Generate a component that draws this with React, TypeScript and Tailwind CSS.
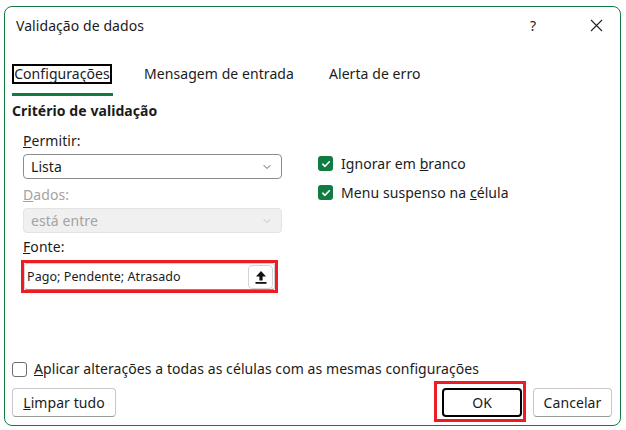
import { ChevronDown } from "lucide-react";

const Check = () => (
  <span className="w-[15px] h-[15px] rounded-[3px] bg-[#107c41] flex items-center justify-center">
    <svg width="10" height="10" viewBox="0 0 10 10" fill="none">
      <path d="M1.8 5.2 L4 7.3 L8.3 2.8" stroke="white" strokeWidth="1.6" strokeLinecap="round" strokeLinejoin="round" />
    </svg>
  </span>
);

const UploadIcon = () => (
  <svg width="12" height="14" viewBox="0 0 12 14">
    <path d="M6 1 L11 6.5 L7.6 6.5 L7.6 10.5 L4.4 10.5 L4.4 6.5 L1 6.5 Z" fill="#111" />
    <rect x="0.5" y="12" width="11" height="1.8" fill="#111" />
  </svg>
);

const Select = ({ value, disabled }: { value: string; disabled?: boolean }) => (
  <div
    className={
      disabled
        ? "h-[25px] w-[259px] rounded-[4px] border border-[#e3e3e3] bg-[#f0f0f0] flex items-center pl-[7px] pr-[8px] text-[#a3a3a3]"
        : "h-[25px] w-[259px] rounded-[4px] border border-[#8c8c8c] bg-white flex items-center pl-[7px] pr-[8px]"
    }
  >
    <span>{value}</span>
    <ChevronDown
      className="ml-auto"
      size={12}
      strokeWidth={1.6}
      color={disabled ? "#b5b5b5" : "#333"}
    />
  </div>
);

export default function App() {
  return (
    <div className="w-[626px] h-[430px] bg-white pl-[4px] pt-[6px] font-['Noto_Sans',sans-serif] text-[14px] leading-[20px] tracking-[0.07px] text-[#1b1b1b]">
      <div className="w-[617px] h-[420px] border border-[#107c41] rounded-[8px] bg-white flex flex-col">
        {/* title bar */}
        <div className="h-[37px] flex items-center pl-[11px]">
          <span>Validação de dados</span>
          <span className="ml-auto w-[10px] text-center">?</span>
          <span className="ml-[52px] mr-[17px] w-[13px] h-[13px] flex items-center justify-center">
            <svg width="13" height="13" viewBox="0 0 13 13">
              <path d="M1 1 L12 12 M12 1 L1 12" stroke="#222" strokeWidth="1.1" />
            </svg>
          </span>
        </div>

        {/* tabs */}
        <div className="mt-[20px] pl-[7px] flex">
          <div className="flex flex-col w-[101px]">
            <span className="border-2 border-black w-[100px] text-center leading-[16px]">
              Configurações
            </span>
            <span className="mt-[9px] h-[3px] bg-[#107c41]" />
          </div>
          <span className="ml-[31px] leading-[20px]">Mensagem de entrada</span>
          <span className="ml-[35px] leading-[20px]">Alerta de erro</span>
        </div>

        <div className="mt-[5px] pl-[7px] font-bold">Critério de validação</div>

        {/* body */}
        <div className="flex pl-[18px]">
          <div className="flex flex-col w-[259px]">
            <span className="mt-[10px]">
              <u>P</u>ermitir:
            </span>
            <div className="mt-[3px]">
              <Select value="Lista" />
            </div>
            <span className="mt-[6px] text-[#a3a3a3]">
              <u>D</u>ados:
            </span>
            <div className="mt-[3px]">
              <Select value="está entre" disabled />
            </div>
            <span className="mt-[4px]">
              <u>F</u>onte:
            </span>
            <div className="mt-[3px] -ml-[2px] w-[257px] h-[33px] border-[3px] border-[#ed1c24]">
              <div className="h-[27px] border border-[#d0d0d0] border-b-[#8a8a8a] rounded-[3px] bg-white flex items-center pl-[2px] pr-[1px]">
                <span className="text-[12.5px]">Pago; Pendente; Atrasado</span>
                <span className="ml-auto w-[25px] h-[24px] border border-[#d4d4d4] rounded-[4px] flex items-center justify-center">
                  <UploadIcon />
                </span>
              </div>
            </div>
          </div>

          <div className="ml-[36px] pt-[35px] flex flex-col gap-[14px]">
            <div className="flex items-center h-[15px]">
              <Check />
              <span className="ml-[8px]">
                Ignorar em <u>b</u>ranco
              </span>
            </div>
            <div className="flex items-center h-[15px]">
              <Check />
              <span className="ml-[8px]">
                Menu suspenso na <u>c</u>élula
              </span>
            </div>
          </div>
        </div>

        <div className="flex-1" />

        {/* bottom */}
        <div className="pl-[7px] flex items-center h-[20px]">
          <span className="w-[15px] h-[15px] rounded-[3px] border border-[#6e6e6e] bg-white" />
          <span className="ml-[7px]">
            <u>A</u>plicar alterações a todas as células com as mesmas configurações
          </span>
        </div>
        <div className="mt-[9px] mb-[8px] pl-[7px] pr-[8px] flex items-center">
          <button className="h-[29px] w-[104px] rounded-[4px] border border-[#c8c8c8] border-b-[#9a9a9a] bg-white">
            <u>L</u>impar tudo
          </button>
          <div className="ml-auto relative">
            <span className="absolute -left-[8px] -top-[7px] -right-[4px] -bottom-[5px] border-[3px] border-[#ed1c24]" />
            <button className="relative h-[29px] w-[80px] rounded-[4px] border-2 border-black bg-white">
              OK
            </button>
          </div>
          <button className="ml-[11px] h-[29px] w-[79px] rounded-[4px] border border-[#c8c8c8] border-b-[#9a9a9a] bg-white">
            Cancelar
          </button>
        </div>
      </div>
    </div>
  );
}
